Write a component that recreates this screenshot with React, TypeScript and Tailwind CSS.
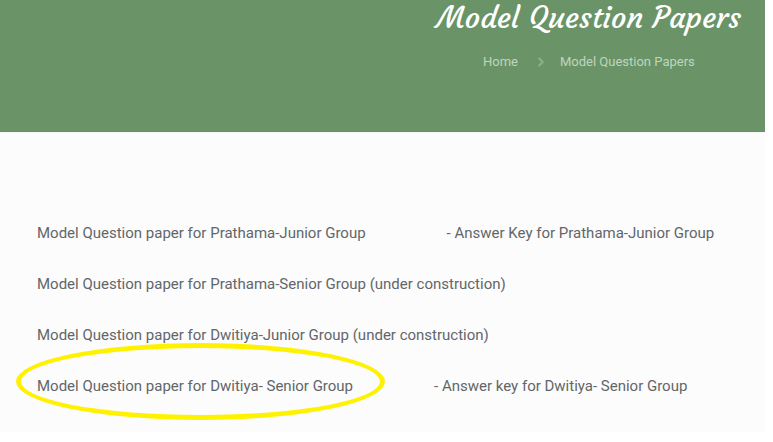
import { ChevronRight } from 'lucide-react';

type Paper = {
  title: string;
  answerKey?: string;
  circled?: boolean;
};

const papers: Paper[] = [
  {
    title: 'Model Question paper for Prathama-Junior Group',
    answerKey: 'Answer Key for Prathama-Junior Group',
  },
  { title: 'Model Question paper for Prathama-Senior Group (under construction)' },
  { title: 'Model Question paper for Dwitiya-Junior Group (under construction)' },
  {
    title: 'Model Question paper for Dwitiya- Senior Group',
    answerKey: 'Answer key for Dwitiya- Senior Group',
    circled: true,
  },
];

function PageHeader() {
  return (
    <header className="flex justify-end bg-[#6a9468] pr-6 pb-[56px]">
      <div className="flex flex-col items-center gap-3">
        <h1 className="font-['Courgette','Lato',sans-serif] text-[30px] leading-[36px] text-white">
          Model Question Papers
        </h1>
        <nav aria-label="Breadcrumb">
          <ol className="flex items-center text-[13px] leading-7 text-[#bfd5be]">
            <li><a href="#home">Home</a></li>
            <li aria-hidden="true" className="pr-3 pl-4">
              <ChevronRight className="size-[14px] text-[#8bb088]" strokeWidth={4} />
            </li>
            <li><a href="#papers" aria-current="page">Model Question Papers</a></li>
          </ol>
        </nav>
      </div>
    </header>
  );
}

function PaperRow({ title, answerKey, circled }: Paper) {
  return (
    <li className="flex gap-[81px]">
      <div className="relative">
        <a href="#paper">{title}</a>
        {circled && (
          <div className="pointer-events-none absolute -top-[30px] -right-8 -bottom-5 -left-[21px] rounded-[50%] border-5 border-[#fff200]" />
        )}
      </div>
      {answerKey && <a href="#answer-key">- {answerKey}</a>}
    </li>
  );
}

export default function App() {
  return (
    <div className="bg-white pr-2 pb-2 font-['Roboto',sans-serif]">
      <PageHeader />
      <main className="border-t border-[#f5f5f5] bg-[#fcfcfc] px-[37px] pt-[87px] pb-8">
        <ul className="flex flex-col gap-6 text-[15px] leading-[27px] whitespace-nowrap text-[#626669]">
          {papers.map((paper) => (
            <PaperRow key={paper.title} {...paper} />
          ))}
        </ul>
      </main>
    </div>
  );
}
